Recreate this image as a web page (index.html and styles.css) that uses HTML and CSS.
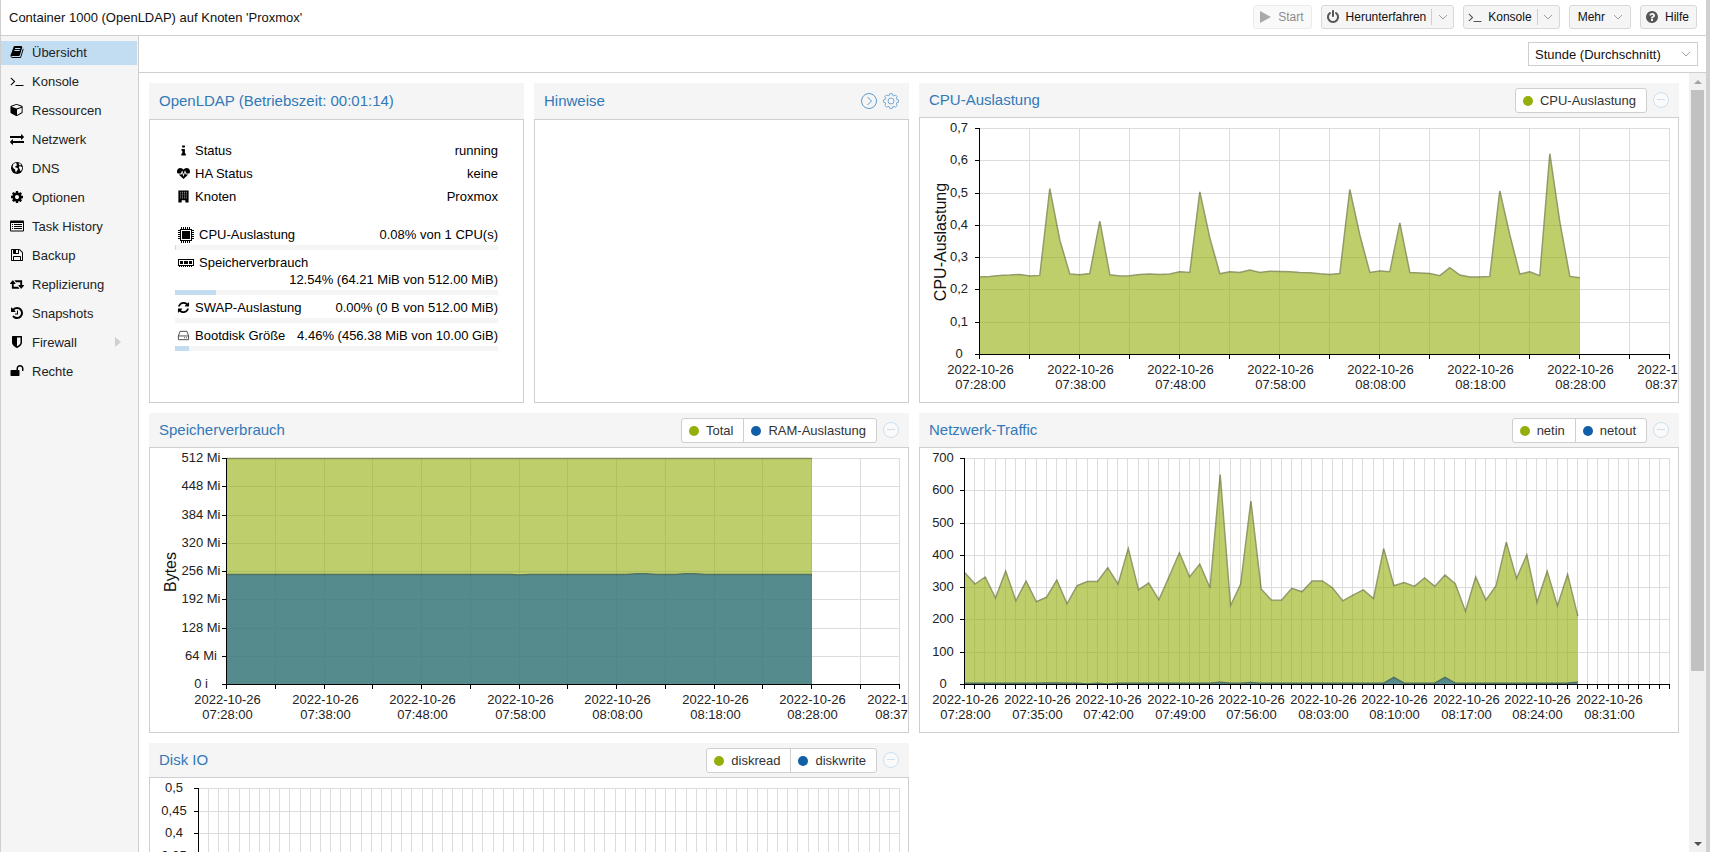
FILE: index.html
```html
<!DOCTYPE html>
<html lang="de">
<head>
<meta charset="utf-8">
<title>Container 1000 (OpenLDAP)</title>
<link rel="stylesheet" href="styles.css">
</head>
<body>
<svg class="sprite" aria-hidden="true">
  <symbol id="i-book" viewBox="0 0 1792 1792"><path d="M1703 478q40 57 18 129l-275 906q-19 64-76.500 107.500t-122.500 43.500h-923q-77 0-148.500-53.500t-99.500-131.500q-24-67-2-127 0-4 3-27t4-37q1-8-3-21.500t-3-19.500q2-11 8-21t16.500-23.500 16.500-23.500q23-38 45-91.500t30-91.500q3-10 .5-30t-.5-28q3-11 17-28t17-23q21-36 42-92t25-90q1-9-2.500-32t.5-28q4-13 22-30.500t22-22.500q19-26 42.500-84.500t27.500-96.500q1-8-3-25.500t-2-26.500q2-8 9-18t18-23 17-21q8-12 16.500-30.500t15-35 16-36 19.500-32 26.500-23.500 36-11.500 47.500 5.500l-1 3q38-9 51-9h761q74 0 114 56t18 130l-274 906q-36 119-71.500 153.500t-128.500 34.500h-869q-27 0-38 15-11 16-1 43 24 70 144 70h923q29 0 56-15.500t35-41.500l300-987q7-22 5-57 38 15 59 43zm-1064 2q-4 13 2 22.500t20 9.500h608q13 0 25.500-9.500t16.500-22.500l21-64q4-13-2-22.500t-20-9.500h-608q-13 0-25.500 9.500t-16.500 22.500zm-83 256q-4 13 2 22.500t20 9.500h608q13 0 25.500-9.500t16.500-22.500l21-64q4-13-2-22.500t-20-9.500h-608q-13 0-25.500 9.500t-16.500 22.500z"/></symbol>
  <symbol id="i-terminal" viewBox="0 0 1792 1792"><path d="M649 983l-466 466q-10 10-23 10t-23-10l-50-50q-10-10-10-23t10-23l393-393-393-393q-10-10-10-23t10-23l50-50q10-10 23-10t23 10l466 466q10 10 10 23t-10 23zm1079 457v64q0 14-9 23t-23 9h-960q-14 0-23-9t-9-23v-64q0-14 9-23t23-9h960q14 0 23 9t9 23z"/></symbol>
  <symbol id="i-cube" viewBox="0 0 1792 1920"><path d="M896 1629l640-349v-636l-640 233v752zm-64-865l698-254-698-254-698 254zm832-252v768q0 35-18 65t-49 47l-704 384q-28 16-61 16t-61-16l-704-384q-31-17-49-47t-18-65v-768q0-40 23-73t61-47l704-256q22-8 44-8t44 8l704 256q38 14 61 47t23 73z"/></symbol>
  <symbol id="i-exchange" viewBox="0 0 1792 1792"><path d="M1792 1184v192q0 13-9.500 22.500t-22.500 9.500h-1376v192q0 13-9.500 22.500t-22.500 9.500q-12 0-24-10l-319-320q-9-9-9-22 0-14 9-23l320-320q9-9 23-9 13 0 22.500 9.500t9.500 22.500v192h1376q13 0 22.500 9.500t9.500 22.500zm0-544q0 14-9 23l-320 320q-9 9-23 9-13 0-22.500-9.500t-9.500-22.500v-192h-1376q-13 0-22.500-9.500t-9.500-22.500v-192q0-13 9.500-22.500t22.500-9.500h1376v-192q0-14 9-23t23-9q12 0 24 10l319 319q9 9 9 23z"/></symbol>
  <symbol id="i-globe" viewBox="0 0 14 14"><circle cx="7" cy="7" r="6"/><path fill="#f5f5f5" d="M3.200 3.200L5 2l1.800.2-.6 1 .9.500-.7 1.200-1.300.6.400.9 1.400.4 1.200 1-.7 1.400-1 1.300-.2 1.300-.9-1.600-.2-1.700L3.700 7.400 2.600 5.900zM8.600 2.300l1.500.2 1 1.200-.8.900-1.200-.5zM9 5.600l1.800-.3 1.500 1.200-.4 2-1.100 1.600-.9-.5-.1-1.500-1-1z"/></symbol>
  <symbol id="i-cog" viewBox="0 0 1792 1792"><path d="M1152 896q0-106-75-181t-181-75-181 75-75 181 75 181 181 75 181-75 75-181zm512-109v222q0 12-8 23t-20 13l-185 28q-19 54-39 91 35 50 107 138 10 12 10 25t-9 23q-27 37-99 108t-94 71q-12 0-26-9l-138-108q-44 23-91 38-16 136-29 186-7 28-36 28h-222q-14 0-24.500-8.500t-11.500-21.500l-28-184q-49-16-90-37l-141 107q-10 9-25 9-14 0-25-11-126-114-165-168-7-10-7-23 0-12 8-23 15-21 51-66.500t54-70.500q-27-50-41-99l-183-27q-13-2-21-12.500t-8-23.500v-222q0-12 8-23t19-13l186-28q14-46 39-92-40-57-107-138-10-12-10-24 0-10 9-23 26-36 98.500-107.500t94.500-71.500q13 0 26 10l138 107q44-23 91-38 16-136 29-186 7-28 36-28h222q14 0 24.500 8.500t11.500 21.500l28 184q49 16 90 37l142-107q9-9 24-9 13 0 25 10 129 119 165 170 7 8 7 22 0 12-8 23-15 21-51 66.500t-54 70.500q26 50 41 98l183 28q13 2 21 12.500t8 23.500z"/></symbol>
  <symbol id="i-list" viewBox="0 0 14 14"><path fill-rule="evenodd" d="M1 1.500h12a1 1 0 0 1 1 1v9a1 1 0 0 1-1 1H1a1 1 0 0 1-1-1v-9a1 1 0 0 1 1-1zM1 4v7.500h12V4zM2 5h1v1H2zM4 5h8v1H4zM2 7h1v1H2zM4 7h8v1H4zM2 9h1v1H2zM4 9h8v1H4z"/></symbol>
  <symbol id="i-floppy" viewBox="0 0 1792 1792"><path d="M512 1536h768v-384h-768v384zm896 0h128v-896q0-14-10-38.500t-20-34.500l-281-281q-10-10-34-20t-39-10v416q0 40-28 68t-68 28h-576q-40 0-68-28t-28-68v-416h-128v1280h128v-416q0-40 28-68t68-28h832q40 0 68 28t28 68v416zm-384-928v-320q0-13-9.500-22.500t-22.500-9.500h-192q-13 0-22.500 9.500t-9.500 22.500v320q0 13 9.500 22.500t22.500 9.500h192q13 0 22.500-9.500t9.500-22.500zm640 32v928q0 40-28 68t-68 28h-1344q-40 0-68-28t-28-68v-1344q0-40 28-68t68-28h928q40 0 88 20t76 48l280 280q28 28 48 76t20 88z"/></symbol>
  <symbol id="i-retweet" viewBox="0 0 1920 1792"><path d="M1280 1504q0 13-9.500 22.500t-22.500 9.500h-960q-8 0-13.500-2t-9-7-5.500-8-3-11.500-1-11.500v-600h-192q-26 0-45-19t-19-45q0-24 15-41l320-384q19-22 49-22t49 22l320 384q15 17 15 41 0 26-19 45t-45 19h-192v384h576q16 0 25 11l160 192q7 10 7 21zm640-416q0 24-15 41l-320 384q-20 23-49 23t-49-23l-320-384q-15-17-15-41 0-26 19-45t45-19h192v-384h-576q-16 0-25-12l-160-192q-7-9-7-20 0-13 9.500-22.500t22.500-9.500h960q8 0 13.500 2t9 7 5.500 8 3 11.500 1 11.500v600h192q26 0 45 19t19 45z"/></symbol>
  <symbol id="i-history" viewBox="0 0 1792 1792"><path d="M1664 896q0 156-61 298t-164 245-245 164-298 61q-172 0-327-72.500t-264-204.500q-7-10-6.500-22.500t8.500-20.500l137-138q10-9 25-9 16 2 23 12 73 95 179 147t225 52q104 0 198.500-40.500t163.500-109.500 109.500-163.500 40.500-198.500-40.500-198.500-109.500-163.500-163.500-109.500-198.500-40.500q-98 0-188 35.500t-160 101.500l137 138q31 30 14 69-17 40-59 40h-448q-26 0-45-19t-19-45v-448q0-42 40-59 39-17 69 14l130 129q107-101 244.500-156.500t284.500-55.500q156 0 298 61t245 164 164 245 61 298zm-640-288v448q0 14-9 23t-23 9h-320q-14 0-23-9t-9-23v-64q0-14 9-23t23-9h224v-352q0-14 9-23t23-9h64q14 0 23 9t9 23z"/></symbol>
  <symbol id="i-shield" viewBox="0 0 1792 1792"><path d="M1344 960v-640h-448v1137q119-63 213-137 235-184 235-360zm192-768v768q0 86-33.500 170.500t-83 150-118 127.500-126.500 103-121 77.500-89.500 49.500-42.500 20q-12 6-26 6t-26-6q-16-7-42.500-20t-89.500-49.500-121-77.500-126.500-103-118-127.500-83-150-33.500-170.500v-768q0-26 19-45t45-19h1152q26 0 45 19t19 45z"/></symbol>
  <symbol id="i-unlock" viewBox="0 0 1792 1792"><path d="M1728 576v256q0 26-19 45t-45 19h-64q-26 0-45-19t-19-45v-256q0-106-75-181t-181-75-181 75-75 181v192h96q40 0 68 28t28 68v576q0 40-28 68t-68 28h-960q-40 0-68-28t-28-68v-576q0-40 28-68t68-28h672v-192q0-185 131.500-316.500t316.500-131.500 316.500 131.500 131.500 316.500z"/></symbol>
  <symbol id="i-play" viewBox="0 0 14 14"><path d="M2 1l11 6-11 6z"/></symbol>
  <symbol id="i-power" viewBox="0 0 1792 1792"><path d="M1664 896q0 156-61 298t-164 245-245 164-298 61-298-61-245-164-164-245-61-298q0-182 80.500-343t226.500-270q43-32 95.500-25t83.500 50q32 42 24.500 94.500t-49.500 84.500q-98 74-151.500 181t-53.500 228q0 104 40.500 198.500t109.500 163.500 163.500 109.500 198.500 40.500 198.500-40.500 163.500-109.500 109.500-163.500 40.500-198.500q0-121-53.500-228t-151.500-181q-42-32-49.500-84.500t24.500-94.500q31-43 84-50t95 25q146 109 226.500 270t80.500 343zm-640-768v640q0 52-38 90t-90 38-90-38-38-90v-640q0-52 38-90t90-38 90 38 38 90z"/></symbol>
  <symbol id="i-help" viewBox="0 0 1792 1792"><path d="M1024 1376v-192q0-14-9-23t-23-9h-192q-14 0-23 9t-9 23v192q0 14 9 23t23 9h192q14 0 23-9t9-23zm256-672q0-88-55.500-163t-138.500-116-170-41q-243 0-371 213-15 24 8 42l132 100q7 6 19 6 16 0 25-12 53-68 86-92 34-24 86-24 48 0 85.500 26t37.500 59q0 38-20 61t-68 45q-63 28-115.500 86.500t-52.500 125.500v36q0 14 9 23t23 9h192q14 0 23-9t9-23q0-19 21.500-49.500t54.500-49.500q32-18 49-28.500t46-35 44.500-48 28-60.500 12.500-81zm384 192q0 209-103 385.500t-279.500 279.500-385.500 103-385.500-103-279.500-279.500-103-385.500 103-385.500 279.500-279.500 385.500-103 385.500 103 279.500 279.500 103 385.500z"/></symbol>
  <symbol id="i-chevron" viewBox="0 0 10 10"><path d="M1 3l4 4 4-4" fill="none" stroke="#a0a0a0"/></symbol>
  <symbol id="i-minus" viewBox="0 0 16 16"><circle cx="8" cy="8" r="7.500" fill="#fafafa" stroke="#cddfee"/><path d="M4 7.500h8" stroke="#cddfee"/></symbol>
  <symbol id="i-next" viewBox="0 0 16 16"><g fill="none" stroke="#5f9bcd"><circle cx="8" cy="8" r="7.500"/><path d="M6.500 4l4 4-4 4"/></g></symbol>
  <symbol id="i-gear" viewBox="0 0 16 16"><g fill="none" stroke="#76aad6"><circle cx="8" cy="8" r="3"/><path d="M6.700 .7h2.600l.4 1.700 1.300.5 1.500-.9 1.700 1.700-.9 1.500.5 1.300 1.600.3v2.500l-1.600.4-.5 1.300.9 1.500-1.800 1.700-1.400-.9-1.300.5-.4 1.600H6.700l-.4-1.600-1.300-.5-1.500.9-1.700-1.700.9-1.500-.5-1.300L.6 9.300V6.800l1.600-.4.500-1.300-.9-1.500 1.700-1.700 1.500.9 1.300-.5z"/></g></symbol>
  <symbol id="i-info" viewBox="0 0 14 14"><path d="M5.500 1.500h3v2.300h-3zM4.800 5.300h3.700v5h1v2H4.700v-2h1V7.200h-.9z"/></symbol>
  <symbol id="i-heart" viewBox="0 0 14 14"><path d="M7 12.900L1.900 8h3l.7-1.600 1.300 4L8.600 6l.8 2h2.700zM0 5c0-2.500 1.500-3.800 3.500-3.800C5 1.200 6.200 2 7 3c.8-1 2-1.800 3.500-1.800C12.500 1.200 14 2.500 14 5c0 .8-.3 1.500-.7 2.100h-3.200L8.600 3.600 7 7.900 5.600 3.700 4.200 7.100H.7C.3 6.500 0 5.800 0 5z"/></symbol>
  <symbol id="i-building" viewBox="0 0 14 14"><path d="M1.500.5h11v13H9V11H5v2.500H1.500z"/><path d="M3.500 2.500h7M3.500 4.500h7M3.500 6.500h7M3.500 8.500h7" stroke="#bbb" stroke-dasharray="1 1"/></symbol>
  <symbol id="i-cpu" viewBox="0 0 16 16"><path fill-rule="evenodd" d="M2 2h12v12H2zM3 3v10h10V3z"/><path d="M4 4h8v8H4z"/><path fill="none" stroke="#000" stroke-dasharray="1 1" d="M3 .5h10M3 15.500h10M.5 3v10M15.500 3v10"/><path fill="none" stroke="#000" stroke-dasharray="1 1" d="M3 1.500h10M3 14.500h10M1.500 3v10M14.500 3v10"/></symbol>
  <symbol id="i-ram" viewBox="0 0 16 16"><path fill-rule="evenodd" d="M0 4h16v7H0zM1 5v5h14V5z"/><path d="M2 6h3v3H2zM6 6h4v3H6zM11 6h3v3h-3z"/><path stroke="#000" stroke-dasharray="1 1" d="M1 11.500h14"/></symbol>
  <symbol id="i-refresh" viewBox="0 0 1792 1792"><path d="M1639 1056q0 5-1 7-64 268-268 434.500t-478 166.500q-146 0-282.500-55t-243.500-157l-129 129q-19 19-45 19t-45-19-19-45v-448q0-26 19-45t45-19h448q26 0 45 19t19 45-19 45l-137 137q71 66 161 102t187 36q134 0 250-65t186-179q11-17 53-117 8-23 30-23h192q13 0 22.500 9.500t9.500 22.500zm25-800v448q0 26-19 45t-45 19h-448q-26 0-45-19t-19-45 19-45l138-138q-148-137-349-137-134 0-250 65t-186 179q-11 17-53 117-8 23-30 23h-199q-13 0-22.500-9.500t-9.500-22.500v-7q65-268 270-434.500t480-166.500q146 0 284 55.500t245 156.500l130-129q19-19 45-19t45 19 19 45z"/></symbol>
  <symbol id="i-hdd" viewBox="0 0 14 14"><g fill="none" stroke="#444"><path d="M1.500 7.500l1.800-5h7.400l1.800 5v4h-11zM1.500 7.500h11"/></g><path fill="#444" d="M7.500 9h1v1h-1zM9.800 9h1v1h-1z"/></symbol>
</svg>

<div class="window">
  <header class="titlebar">
    <h1 class="heading">Container 1000 (OpenLDAP) auf Knoten 'Proxmox'</h1>
    <div class="actions">
      <button class="btn" disabled><svg class="icon"><use href="#i-play"/></svg>Start</button>
      <div class="split">
        <button class="btn-main"><svg class="icon"><use href="#i-power"/></svg>Herunterfahren</button>
        <button class="btn-arrow" aria-label="Weitere Optionen zum Herunterfahren"><svg class="chevron"><use href="#i-chevron"/></svg></button>
      </div>
      <div class="split">
        <button class="btn-main"><svg class="icon"><use href="#i-terminal"/></svg>Konsole</button>
        <button class="btn-arrow" aria-label="Konsolentyp"><svg class="chevron"><use href="#i-chevron"/></svg></button>
      </div>
      <button class="btn btn-menu">Mehr<svg class="chevron"><use href="#i-chevron"/></svg></button>
      <button class="btn"><svg class="icon"><use href="#i-help"/></svg>Hilfe</button>
    </div>
  </header>

  <div class="main">
    <nav class="nav">
      <a class="nav-item active" href="#summary" aria-current="page"><svg class="icon"><use href="#i-book"/></svg>Übersicht</a>
      <a class="nav-item" href="#console"><svg class="icon"><use href="#i-terminal"/></svg>Konsole</a>
      <a class="nav-item" href="#resources"><svg class="icon"><use href="#i-cube"/></svg>Ressourcen</a>
      <a class="nav-item" href="#network"><svg class="icon"><use href="#i-exchange"/></svg>Netzwerk</a>
      <a class="nav-item" href="#dns"><svg class="icon"><use href="#i-globe"/></svg>DNS</a>
      <a class="nav-item" href="#options"><svg class="icon"><use href="#i-cog"/></svg>Optionen</a>
      <a class="nav-item" href="#tasks"><svg class="icon"><use href="#i-list"/></svg>Task History</a>
      <a class="nav-item" href="#backup"><svg class="icon"><use href="#i-floppy"/></svg>Backup</a>
      <a class="nav-item" href="#replication"><svg class="icon"><use href="#i-retweet"/></svg>Replizierung</a>
      <a class="nav-item" href="#snapshots"><svg class="icon"><use href="#i-history"/></svg>Snapshots</a>
      <a class="nav-item" href="#firewall"><svg class="icon"><use href="#i-shield"/></svg>Firewall<span class="expander"></span></a>
      <a class="nav-item" href="#permissions"><svg class="icon"><use href="#i-unlock"/></svg>Rechte</a>
    </nav>

    <div class="content">
      <div class="toolbar">
        <div class="combo">
          <select class="combo-field" aria-label="Zeitraum"><option>Stunde (Durchschnitt)</option></select>
          <svg class="chevron combo-arrow"><use href="#i-chevron"/></svg>
        </div>
      </div>
      <div class="viewport">
        <main class="panels">
          <section class="panel">
            <header class="panel-head tall"><h2 class="panel-title">OpenLDAP (Betriebszeit: 00:01:14)</h2></header>
            <div class="panel-body status">
              <div class="info"><svg class="icon"><use href="#i-info"/></svg><span>Status</span><span class="value">running</span></div>
              <div class="info"><svg class="icon"><use href="#i-heart"/></svg><span>HA Status</span><span class="value">keine</span></div>
              <div class="info"><svg class="icon"><use href="#i-building"/></svg><span>Knoten</span><span class="value">Proxmox</span></div>
              <div class="meters">
                <div class="meter"><div class="meter-text"><svg class="icon large"><use href="#i-cpu"/></svg><span>CPU-Auslastung</span><span class="value">0.08% von 1 CPU(s)</span></div><div class="track"><div class="fill" style="width:0.3%"></div></div></div>
                <div class="meter"><div class="meter-text"><svg class="icon large"><use href="#i-ram"/></svg><span>Speicherverbrauch</span><span class="value">12.54% (64.21 MiB von 512.00 MiB)</span></div><div class="track"><div class="fill" style="width:12.54%"></div></div></div>
                <div class="meter"><div class="meter-text"><svg class="icon"><use href="#i-refresh"/></svg><span>SWAP-Auslastung</span><span class="value">0.00% (0 B von 512.00 MiB)</span></div><div class="track"></div></div>
                <div class="meter"><div class="meter-text"><svg class="icon"><use href="#i-hdd"/></svg><span>Bootdisk Größe</span><span class="value">4.46% (456.38 MiB von 10.00 GiB)</span></div><div class="track"><div class="fill" style="width:4.46%"></div></div></div>
              </div>
            </div>
          </section>

          <section class="panel">
            <header class="panel-head tall"><h2 class="panel-title">Hinweise</h2>
              <button class="tool" aria-label="Aufklappen"><svg><use href="#i-next"/></svg></button>
              <button class="tool" aria-label="Hinweise bearbeiten"><svg><use href="#i-gear"/></svg></button>
            </header>
            <div class="panel-body"></div>
          </section>

          <section class="panel wide">
            <header class="panel-head"><h2 class="panel-title">CPU-Auslastung</h2>
              <div class="legend"><button class="legend-item"><span class="dot green"></span>CPU-Auslastung</button></div>
              <button class="tool" aria-label="Zoom zurücksetzen"><svg><use href="#i-minus"/></svg></button>
            </header>
            <div class="panel-body"><svg class="chart" data-chart="cpu" role="img" aria-label="CPU-Auslastung"></svg></div>
          </section>

          <section class="panel wide">
            <header class="panel-head"><h2 class="panel-title">Speicherverbrauch</h2>
              <div class="legend"><button class="legend-item"><span class="dot green"></span>Total</button><button class="legend-item"><span class="dot blue"></span>RAM-Auslastung</button></div>
              <button class="tool" aria-label="Zoom zurücksetzen"><svg><use href="#i-minus"/></svg></button>
            </header>
            <div class="panel-body"><svg class="chart" data-chart="memory" role="img" aria-label="Speicherverbrauch"></svg></div>
          </section>

          <section class="panel wide">
            <header class="panel-head"><h2 class="panel-title">Netzwerk-Traffic</h2>
              <div class="legend"><button class="legend-item"><span class="dot green"></span>netin</button><button class="legend-item"><span class="dot blue"></span>netout</button></div>
              <button class="tool" aria-label="Zoom zurücksetzen"><svg><use href="#i-minus"/></svg></button>
            </header>
            <div class="panel-body"><svg class="chart" data-chart="network" role="img" aria-label="Netzwerk-Traffic"></svg></div>
          </section>

          <section class="panel wide">
            <header class="panel-head"><h2 class="panel-title">Disk IO</h2>
              <div class="legend"><button class="legend-item"><span class="dot green"></span>diskread</button><button class="legend-item"><span class="dot blue"></span>diskwrite</button></div>
              <button class="tool" aria-label="Zoom zurücksetzen"><svg><use href="#i-minus"/></svg></button>
            </header>
            <div class="panel-body"><svg class="chart" data-chart="disk" role="img" aria-label="Disk IO"></svg></div>
          </section>
        </main>
        <div class="scrollbar" aria-hidden="true">
          <span class="scroll-arrow up"></span>
          <div class="scroll-track"><div class="scroll-thumb"></div></div>
          <span class="scroll-arrow down"></span>
        </div>
      </div>
    </div>
  </div>
</div>
<script src="charts.js"></script>
</body>
</html>
```
FILE: styles.css
```css
* { box-sizing: border-box; }

body {
  margin: 0;
  background: #fff;
  color: #111;
  font: 13px/17px "Liberation Sans", Arial, sans-serif;
}

button, select { font-family: inherit; color: inherit; }
a { color: inherit; text-decoration: none; }
h1, h2 { margin: 0; font-weight: 400; }

.sprite { display: none; }

.window {
  display: flex;
  flex-direction: column;
  height: 100vh;
  border-left: 1px solid #cfcfcf;
  border-right: 4px solid #d0d0d0;
}

.titlebar {
  display: flex;
  align-items: center;
  justify-content: space-between;
  flex: none;
  height: 36px;
  padding: 0 9px 1px 8px;
  border-bottom: 1px solid #cfcfcf;
}
.heading { font-size: 13px; }

.actions { display: flex; gap: 9px; }

.icon { width: 14px; height: 14px; flex: none; fill: currentColor; }
.chevron { width: 10px; height: 10px; flex: none; }

.btn, .split {
  display: flex;
  align-items: center;
  height: 24px;
  border: 1px solid #d8d8d8;
  border-radius: 3px;
  background: #f5f5f5;
  font-size: 12px;
  color: #111;
}
.btn { gap: 6px; padding: 0 7px 0 4px; }
.btn:disabled { opacity: .5; }
.btn-menu { gap: 8px; padding: 0 7px 0 8px; }
.btn-main, .btn-arrow {
  display: flex;
  align-items: center;
  border: 0;
  background: none;
  font-size: 12px;
}
.btn-main { gap: 6px; padding: 0 5px 0 4px; }
.btn-arrow {
  justify-content: center;
  width: 22px;
  height: 16px;
  padding: 0;
  border-left: 1px solid #cfcfcf;
}
.actions .icon { color: #555; }

.main { display: flex; flex: 1; min-height: 0; }

.nav {
  display: flex;
  flex-direction: column;
  gap: 5px;
  flex: none;
  width: 138px;
  padding: 5px 1px 0 0;
  background: #f5f5f5;
  border-right: 1px solid #cfcfcf;
}
.nav-item {
  display: flex;
  align-items: center;
  gap: 8px;
  height: 24px;
  padding: 0 16px 2px 9px;
  color: #222;
}
.nav-item .icon { color: #000; }
.nav-item.active { background: #c2ddf2; }
.expander {
  margin-left: auto;
  border: 5px solid transparent;
  border-left: 6px solid #cfcfcf;
  border-right: 0;
}

.content { display: flex; flex-direction: column; flex: 1; min-width: 0; }

.toolbar {
  display: flex;
  align-items: center;
  justify-content: flex-end;
  flex: none;
  height: 37px;
  padding: 0 8px 0 0;
  border-bottom: 1px solid #cfcfcf;
}
.combo { position: relative; }
.combo-field {
  width: 170px;
  height: 24px;
  padding: 0 6px;
  appearance: none;
  border: 1px solid #cfcfcf;
  border-radius: 0;
  background: #fff;
  font-size: 13px;
}
.combo-arrow { position: absolute; right: 7px; top: 7px; pointer-events: none; }

.viewport { display: flex; flex: 1; min-height: 0; }

.panels {
  display: grid;
  grid-template-columns: repeat(4, minmax(0, 1fr));
  align-content: start;
  gap: 10px;
  flex: 1;
  min-width: 0;
  padding: 10px;
  overflow-y: auto;
  scrollbar-width: none;
}

.panel { display: flex; flex-direction: column; min-width: 0; }
.panel.wide { grid-column: span 2; }
.panel-head {
  display: flex;
  align-items: center;
  gap: 6px;
  height: 34px;
  padding: 0 10px;
  background: #f5f5f5;
}
.panel-head.tall { height: 36px; }
.panel-title { flex: 1; padding-bottom: 2px; font-size: 15px; color: #3279b8; }
.panel-body { flex: 1; border: 1px solid #cfcfcf; background: #fff; }

.tool { width: 16px; height: 16px; padding: 0; border: 0; background: none; }
.tool svg { display: block; width: 16px; height: 16px; }

.legend {
  display: flex;
  height: 25px;
  border: 1px solid #cfcfcf;
  border-radius: 3px;
  background: #fff;
}
.legend-item {
  display: flex;
  align-items: center;
  gap: 7px;
  padding: 0 10px 0 7px;
  border: 0;
  background: none;
  font-size: 13px;
  color: #333;
}
.legend-item + .legend-item { border-left: 1px solid #cfcfcf; }
.dot { width: 10px; height: 10px; margin-top: 2px; border-radius: 50%; }
.dot.green { background: #94ae0a; }
.dot.blue { background: #115fa6; }

.status { padding: 20px 25px; color: #000; }
.info, .meter-text { display: flex; align-items: center; gap: 5px; }
.info { height: 23px; padding-bottom: 2px; }
.info .icon, .meter .icon { width: 13px; height: 13px; margin-left: 2px; }
.meter .icon.large { width: 16px; height: 16px; margin-left: 3px; }
.value { margin-left: auto; }
.meters { display: grid; gap: 4px; margin-top: 17px; }
.meter-text { flex-wrap: wrap; row-gap: 0; }
.track { height: 5px; margin-top: 2px; background: #f5f5f5; }
.fill { height: 100%; background: #c2ddf2; }

.chart { display: block; width: 100%; height: 284px; overflow: hidden; }
.grid { stroke: #dcdcdc; fill: none; }
.axis { stroke: #000; fill: none; }
.label { font-size: 13px; fill: #222; text-anchor: middle; }
.axis-title { font-size: 16px; fill: #111; text-anchor: middle; }
.series { opacity: .6; }
.line { fill: none; stroke-width: 1.5; stroke-miterlimit: 4; }
.green-area { fill: #94ae0a; }
.green-line { stroke: #4c5a05; }
.blue-area { fill: #115fa6; }
.blue-line { stroke: #0a3660; }

.scrollbar {
  display: flex;
  flex-direction: column;
  align-items: center;
  flex: none;
  width: 17px;
  background: #f1f1f1;
}
.scroll-track { flex: 1; width: 13px; }
.scroll-thumb { height: 78%; background: #c1c1c1; }
.scroll-arrow { width: 8px; height: 17px; }
.scroll-arrow::before {
  content: "";
  display: block;
  margin-top: 7px;
  border: 4px solid transparent;
}
.scroll-arrow.up::before { border-top: 0; border-bottom-color: #a3a3a3; }
.scroll-arrow.down::before { border-bottom: 0; border-top-color: #505050; }
```
FILE: charts.js
```js
const TOP = 10, BOTTOM = 236, RIGHT_PAD = 9, SPAN = 69;

const flat = (value, changes) => Array.from({ length: 61 }, (_, i) => changes[i] ?? value);

const charts = {
  cpu: {
    left: 59, labelX: 39, title: 'CPU-Auslastung', max: 0.7, step: 5, labelEvery: 10, lastLabel: true,
    yLabels: ['0', '0,1', '0,2', '0,3', '0,4', '0,5', '0,6', '0,7'],
    series: [{ color: 'green', values: [
      .240, .242, .245, .246, .248, .243, .245, .514, .354, .249, .247, .251, .413, .247, .243, .244,
      .248, .249, .248, .249, .256, .254, .504, .361, .250, .256, .254, .262, .254, .258, .257, .256,
      .254, .253, .250, .248, .251, .511, .370, .254, .259, .256, .408, .254, .252, .251, .244, .269,
      .246, .240, .240, .242, .507, .370, .249, .256, .244, .622, .411, .242, .238] }]
  },
  memory: {
    left: 76, labelX: 51, title: 'Bytes', max: 512, step: 5, labelEvery: 10, lastLabel: true,
    yLabels: ['0 i', '64 Mi', '128 Mi', '192 Mi', '256 Mi', '320 Mi', '384 Mi', '448 Mi', '512 Mi'],
    series: [
      { color: 'green', values: flat(512, {}) },
      { color: 'blue', values: flat(249, { 30: 248, 42: 251, 43: 251, 47: 251, 48: 251 }) }]
  },
  network: {
    left: 44, labelX: 23, max: 700, step: 1, labelEvery: 7,
    yLabels: ['0', '100', '200', '300', '400', '500', '600', '700'],
    series: [
      { color: 'green', values: [
        346, 311, 333, 268, 351, 259, 320, 256, 270, 323, 250, 306, 319, 319, 361, 311, 421, 293, 314, 262,
        334, 408, 333, 373, 299, 650, 244, 311, 568, 296, 262, 261, 298, 287, 321, 321, 299, 259, 277, 293,
        266, 421, 306, 316, 304, 330, 304, 339, 312, 226, 333, 261, 306, 441, 328, 401, 254, 351, 243, 341, 212] },
      { color: 'blue', values: flat(4, { 8: 5, 9: 5, 12: 2, 14: 2, 25: 7, 28: 6, 42: 22, 47: 22, 59: 5, 60: 7 }) }]
  },
  disk: {
    left: 48, labelX: 24, max: 0.5, step: 1, labelEvery: 7,
    yLabels: ['0', '0,05', '0,1', '0,15', '0,2', '0,25', '0,3', '0,35', '0,4', '0,45', '0,5'],
    series: []
  }
};

function clock(minute) {
  const t = 7 * 60 + 28 + minute;
  return String(Math.floor(t / 60)).padStart(2, '0') + ':' + String(t % 60).padStart(2, '0') + ':00';
}

function draw(svg) {
  const c = charts[svg.dataset.chart];
  const right = svg.clientWidth - RIGHT_PAD;
  const x = m => c.left + m / SPAN * (right - c.left);
  const y = v => BOTTOM - v / c.max * (BOTTOM - TOP);
  const snap = n => Math.round(n) + 0.5;
  let grid = '', axis = '', labels = '', areas = '';

  c.yLabels.forEach((text, i) => {
    const gy = snap(y(c.max * i / (c.yLabels.length - 1)));
    grid += `M${c.left} ${gy}H${right}`;
    axis += `M${c.left - 4} ${gy}h4`;
    labels += `<text class="label" x="${c.labelX}" y="${gy + 3.5}">${text}</text>`;
  });

  const ticks = [];
  for (let m = 0; m < SPAN; m += c.step) ticks.push(m);
  ticks.push(SPAN);
  ticks.forEach(m => {
    const gx = snap(x(m));
    grid += `M${gx} ${TOP}V${BOTTOM}`;
    axis += `M${gx} ${BOTTOM}v5`;
    if ((m % c.labelEvery === 0) || (m === SPAN && c.lastLabel)) {
      labels += `<text class="label" x="${gx + 1}" y="256">2022-10-26</text>`
        + `<text class="label" x="${gx + 1}" y="271">${clock(m)}</text>`;
    }
  });
  axis += `M${c.left + 0.5} ${TOP}V${BOTTOM + 0.5}H${right + 1}`;

  c.series.forEach(s => {
    const pts = s.values.map((v, m) => `${(x(m) + 0.8).toFixed(1)} ${(y(v) + 0.5).toFixed(1)}`).join('L');
    areas += `<g class="series"><path class="${s.color}-area" d="M${pts}V${BOTTOM + 0.5}H${c.left + 0.5}z"/>`
      + `<path class="line ${s.color}-line" d="M${pts}"/></g>`;
  });

  const title = c.title
    ? `<text class="axis-title" transform="translate(26 124) rotate(-90)">${c.title}</text>` : '';
  svg.innerHTML = `<path class="grid" d="${grid}"/>${areas}<path class="axis" d="${axis}"/>${labels}${title}`;
}

const all = document.querySelectorAll('.chart');
const drawAll = () => all.forEach(draw);
drawAll();
window.addEventListener('resize', drawAll);
```
